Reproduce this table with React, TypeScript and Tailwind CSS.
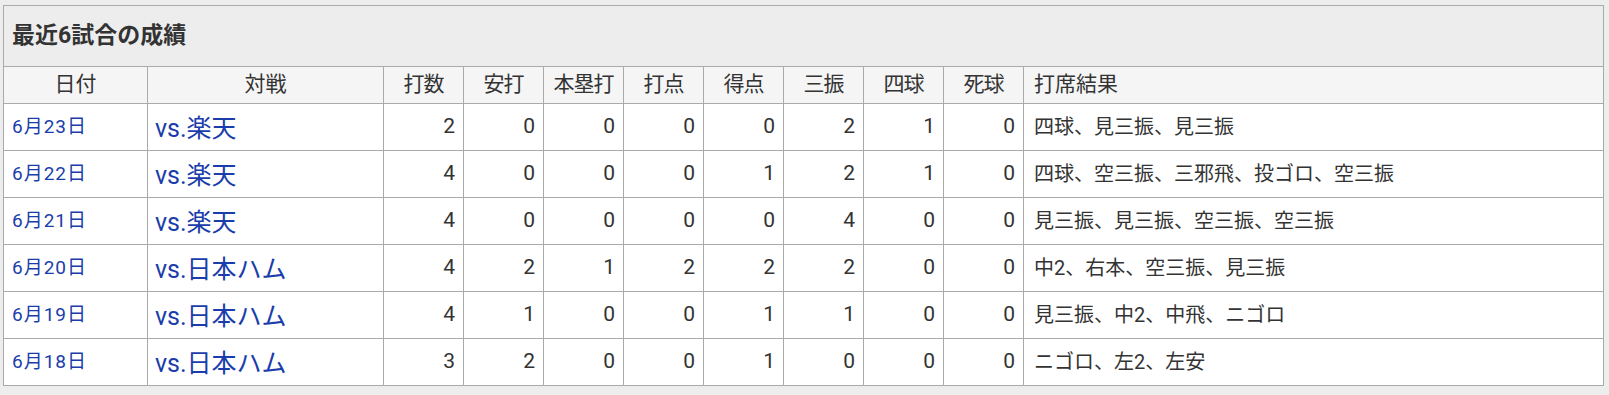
const games = [
  { date: "6月23日", team: "楽天", stats: [2, 0, 0, 0, 0, 2, 1, 0], result: "四球、見三振、見三振" },
  { date: "6月22日", team: "楽天", stats: [4, 0, 0, 0, 1, 2, 1, 0], result: "四球、空三振、三邪飛、投ゴロ、空三振" },
  { date: "6月21日", team: "楽天", stats: [4, 0, 0, 0, 0, 4, 0, 0], result: "見三振、見三振、空三振、空三振" },
  { date: "6月20日", team: "日本ハム", stats: [4, 2, 1, 2, 2, 2, 0, 0], result: "中2、右本、空三振、見三振" },
  { date: "6月19日", team: "日本ハム", stats: [4, 1, 0, 0, 1, 1, 0, 0], result: "見三振、中2、中飛、ニゴロ" },
  { date: "6月18日", team: "日本ハム", stats: [3, 2, 0, 0, 1, 0, 0, 0], result: "ニゴロ、左2、左安" },
];

const statHeads = ["打数", "安打", "本塁打", "打点", "得点", "三振", "四球", "死球"];

export default function App() {
  return (
    <div className="min-h-[395px] bg-[#ededed] pl-[3px] pt-[5px] font-['Roboto','Noto_Sans_CJK_JP',sans-serif] text-[#333]">
      <table className="w-[1601px] table-fixed border-collapse border border-[#aaa]">
        <colgroup>
          <col className="w-[144px]" />
          <col className="w-[236px]" />
          {statHeads.map((h) => (
            <col key={h} className="w-[80px]" />
          ))}
          <col />
        </colgroup>
        <thead>
          <tr className="h-[61px] bg-[#ededed]">
            <th
              colSpan={11}
              className="border border-[#aaa] px-[8px] text-left text-[23px] font-bold"
            >
              最近6試合の成績
            </th>
          </tr>
          <tr className="h-[37px] bg-[#f5f5f5] text-[21px] font-normal">
            <th className="border border-[#aaa] font-normal">日付</th>
            <th className="border border-[#aaa] font-normal">対戦</th>
            {statHeads.map((h) => (
              <th key={h} className="border border-[#aaa] px-0 font-normal tracking-[-1px]">
                {h}
              </th>
            ))}
            <th className="border border-[#aaa] px-[10px] text-left font-normal">打席結果</th>
          </tr>
        </thead>
        <tbody>
          {games.map((g) => (
            <tr key={g.date} className="h-[47px] bg-white">
              <td className="border border-[#aaa] px-[8px] text-[19px] tracking-[1px] text-[#1a3dab]">
                <a href="#">{g.date}</a>
              </td>
              <td className="border border-[#aaa] px-[7px] pt-[3px] text-[25px] text-[#1a3dab]">
                <a href="#">vs.{g.team}</a>
              </td>
              {g.stats.map((s, i) => (
                <td key={i} className="border border-[#aaa] pr-[8px] text-right text-[21px]">
                  {s}
                </td>
              ))}
              <td className="border border-[#aaa] px-[10px] text-[20px]">{g.result}</td>
            </tr>
          ))}
        </tbody>
      </table>
    </div>
  );
}
